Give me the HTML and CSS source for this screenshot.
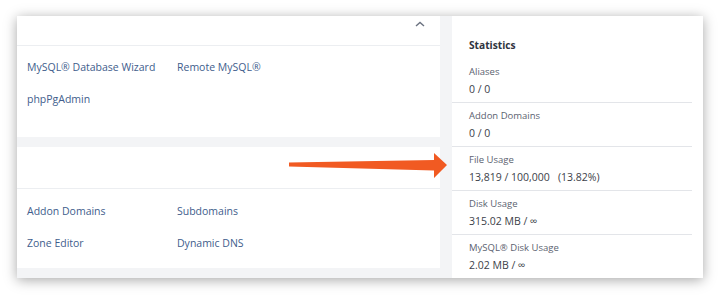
FILE: index.html
```html
<!DOCTYPE html>
<html lang="en">
<head>
    <meta charset="UTF-8">
    <title>cPanel - Statistics</title>
    <link rel="stylesheet" href="styles.css">
</head>
<body>
    <div class="frame">
        <div class="left-col">
            <div class="panel panel-top">
                <div class="panel-head short">
                    <svg class="chevron" width="10" height="6" viewBox="0 0 10 6">
                        <polyline points="1,5 5,1.5 9,5" fill="none" stroke="#6b7280" stroke-width="1.4"/>
                    </svg>
                </div>
                <div class="links">
                    <a href="#">MySQL® Database Wizard</a>
                    <a href="#">Remote MySQL®</a>
                    <a href="#">phpPgAdmin</a>
                </div>
            </div>
            <div class="panel panel-bottom">
                <div class="panel-head tall"></div>
                <div class="links">
                    <a href="#">Addon Domains</a>
                    <a href="#">Subdomains</a>
                    <a href="#">Zone Editor</a>
                    <a href="#">Dynamic DNS</a>
                </div>
            </div>
        </div>

        <div class="stats">
            <h3>Statistics</h3>
            <div class="stat">
                <div class="label">Aliases</div>
                <div class="value">0 / 0</div>
            </div>
            <div class="stat">
                <div class="label">Addon Domains</div>
                <div class="value">0 / 0</div>
            </div>
            <div class="stat">
                <div class="label">File Usage</div>
                <div class="value">13,819 / 100,000 &nbsp; (13.82%)</div>
            </div>
            <div class="stat">
                <div class="label">Disk Usage</div>
                <div class="value">315.02 MB / ∞</div>
            </div>
            <div class="stat">
                <div class="label">MySQL® Disk Usage</div>
                <div class="value">2.02 MB / ∞</div>
            </div>
        </div>
    </div>

    <!-- annotation arrow pointing at File Usage -->
    <svg class="arrow" width="720" height="295" viewBox="0 0 720 295">
        <polygon points="289,162.5 434,160 434,153 447,165 434,178 434,170.5 289,166.5" fill="#f15a22"/>
    </svg>
</body>
</html>
```

FILE: styles.css
```css
body {
    margin: 0;
    background: #ffffff;
    font-family: 'Open Sans', 'Noto Sans', sans-serif;
    position: relative;
    width: 720px;
    height: 295px;
    overflow: hidden;
}
.frame {
    margin: 16px 0 0 17px;
    width: 686px;
    height: 262px;
    background: #f3f4f6;
    box-shadow: 0 2px 12px rgba(0, 0, 0, 0.35);
    display: grid;
    grid-template-columns: 423px 1fr;
    gap: 12px;
    overflow: hidden;
}
.left-col {
    display: flex;
    flex-direction: column;
    gap: 10px;
}
.panel {
    background: #fff;
    height: 121px;
}
.panel-head {
    border-bottom: 1px solid #eceef1;
    position: relative;
}
.panel-head.short {
    height: 29px;
}
.panel-head.tall {
    height: 41px;
}
.chevron {
    position: absolute;
    left: 398px;
    top: 5px;
}
.links {
    display: grid;
    grid-template-columns: 150px 150px;
    row-gap: 14px;
    padding: 12px 10px 0;
}
.panel-bottom .links {
    padding-top: 13px;
}
.links a {
    font-size: 10.5px;
    line-height: 18px;
    color: #415d8c;
    text-decoration: none;
    white-space: nowrap;
}
.stats {
    background: #fff;
    padding-right: 11px;
}
.stats h3 {
    margin: 0;
    padding: 20px 0 5px 17px;
    font-size: 10.2px;
    line-height: 18px;
    font-weight: bold;
    color: #2f3440;
}
.stat {
    padding: 4px 0 4px 17px;
    border-bottom: 1px solid #e3e5e9;
}
.stat .label {
    font-size: 9.5px;
    line-height: 18px;
    color: #5b6270;
}
.stat .value {
    font-size: 10.5px;
    line-height: 17px;
    color: #3c4149;
}
.arrow {
    position: absolute;
    left: 0;
    top: 0;
    pointer-events: none;
}
```
